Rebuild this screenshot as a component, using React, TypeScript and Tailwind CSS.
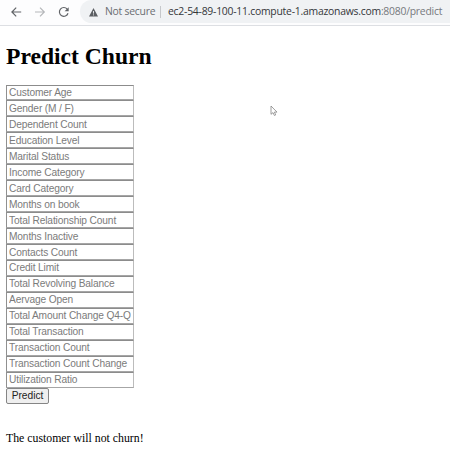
const fields = [
  'Customer Age', 'Gender (M / F)', 'Dependent Count', 'Education Level', 'Marital Status',
  'Income Category', 'Card Category', 'Months on book', 'Total Relationship Count',
  'Months Inactive', 'Contacts Count', 'Credit Limit', 'Total Revolving Balance',
  'Aervage Open', 'Total Amount Change Q4-Q', 'Total Transaction', 'Transaction Count',
  'Transaction Count Change', 'Utilization Ratio',
];

function BrowserBar() {
  return (
    <header className="flex h-[26px] items-start border-b border-[#dddfe3] bg-[#fdfdfe] font-['Open_Sans',sans-serif] text-[10.4px] tracking-[-0.24px]">
      <svg className="mt-[6px] ml-[10px] h-3 w-[62px] shrink-0" viewBox="0 0 62 12" fill="none" strokeWidth="1.2">
        <path d="M11.2 6H2M6.2 1.7L1.9 6L6.2 10.3" stroke="#606367" />
        <path d="M25 6H34.2M30 1.7L34.3 6L30 10.3" stroke="#b5b7ba" />
        <path d="M57.2 3.1A4.4 4.4 0 1 0 58 7.3" stroke="#606367" />
        <path d="M58.7 1.2V5.3H54.6Z" fill="#606367" />
      </svg>
      <div className="ml-2 flex h-[23px] flex-1 items-center rounded-l-full bg-[#f0f2f4] pl-[9px] whitespace-nowrap">
        <svg className="mt-px h-[9px] w-[9px] shrink-0" viewBox="0 0 9 9">
          <path d="M4.5 0L9 8.5H0Z" fill="#5c5f63" />
          <path d="M4.5 3V5.6M4.5 6.4V7.4" stroke="#f0f2f4" strokeWidth="0.9" />
        </svg>
        <span className="ml-[7px] w-[50px] shrink-0 pt-px text-[#6a6d71]">Not secure</span>
        <span className="ml-[5px] h-[12px] w-px shrink-0 bg-[#c6c8cb]" />
        <span className="ml-[7px] pt-px text-[#35373a]">ec2-54-89-100-11.compute-1.amazonaws.com<span className="text-[#77797d]">:8080/predict</span></span>
      </div>
    </header>
  );
}

export default function App() {
  return (
    <div className="relative h-[452px] w-[450px] overflow-hidden bg-white font-['Liberation_Serif',serif] text-black">
      <BrowserBar />
      <main className="pl-[6px]">
        <h1 className="mt-[16px] h-[28px] text-[23.6px] leading-[28px] font-bold whitespace-nowrap">Predict Churn</h1>
        <form className="mt-[14.5px] flex flex-col items-start font-['Liberation_Sans',sans-serif]" onSubmit={(e) => e.preventDefault()}>
          {fields.map((field) => (
            <input
              key={field}
              placeholder={field}
              className="block h-[15.96px] w-[128px] border border-t-[#8c8c8c] border-r-[#bcbcbc] border-b-[#a6a6a6] border-l-[#909090] bg-white px-[2px] text-[10.2px] leading-[13px] tracking-[-0.14px] placeholder:text-[#7b7b7b]"
            />
          ))}
          <button className="h-[16px] w-[43px] rounded-[2px] border border-[#858585] bg-[#efefef] text-[10.2px] leading-[13px] text-[#222]">Predict</button>
        </form>
        <p className="mt-[27px] text-[11.8px] leading-[14px] whitespace-nowrap">The customer will not churn!</p>
      </main>
      <svg className="absolute top-[105px] left-[270px] h-3 w-2" viewBox="0 0 8 12">
        <path d="M1 1V9.3L3 7.6L4.4 10.5L5.7 9.9L4.4 7.1H7Z" fill="white" stroke="#858585" strokeWidth="0.8" />
      </svg>
    </div>
  );
}
